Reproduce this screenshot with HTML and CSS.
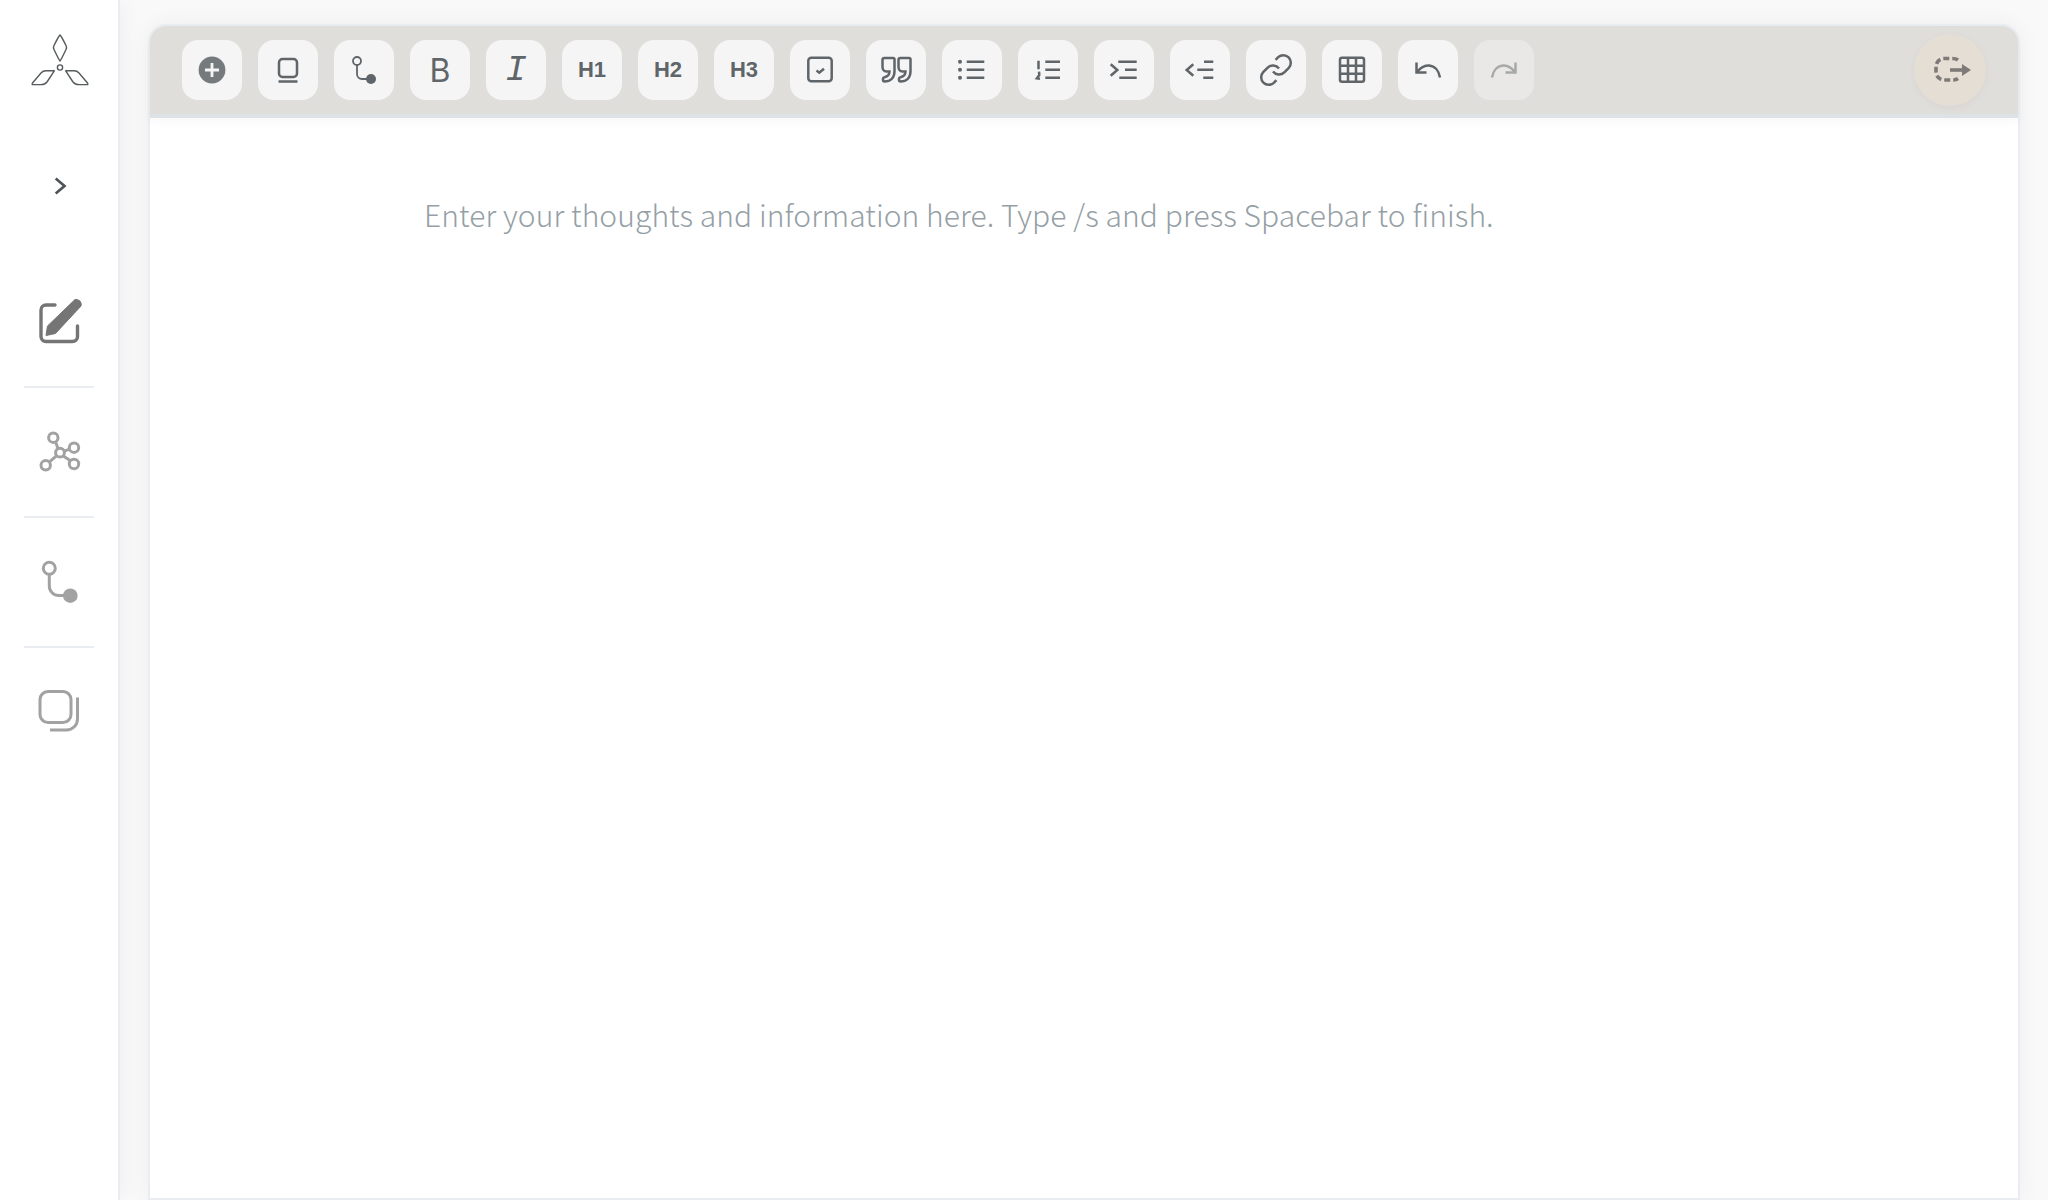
FILE: index.html
```html
<!DOCTYPE html>
<html lang="en">

<head>
    <meta charset="UTF-8">
    <meta name="viewport" content="width=device-width, initial-scale=1.0">
    <title>Editor</title>
    <link rel="stylesheet" href="styles.css">
</head>

<body>
    <div class="app">
        <aside class="sidebar">
            <div class="logo">
                <svg width="60" height="56" viewBox="29 32 60 56" class="logo-icon">
                    <path d="M60 35 Q61 35.5 66 45.5 Q67 47.5 66 49.5 Q61 60 60 61 Q59 60 54 49.5 Q53 47.5 54 45.5 Q59 35.5 60 35 Z" />
                    <circle cx="60" cy="67.5" r="2.6" />
                    <path d="M54.3 70.8 H46 Q43 70.8 41 73 L32.5 83 Q31.5 84.6 33 84.6 H41 Q45 84.6 47 82 Z" />
                    <path d="M65.7 70.8 H74 Q77 70.8 79 73 L87.5 83 Q88.5 84.6 87 84.6 H79 Q75 84.6 73 82 Z" />
                </svg>
            </div>
            <div class="expand">
                <svg width="20" height="24" viewBox="49 174 20 24" class="chevron-icon">
                    <path d="M55.7 178.5 L64.5 186 L55.7 193.5" />
                </svg>
            </div>
            <nav class="side-nav">
                <div class="side-item">
                    <svg width="48" height="48" viewBox="35 298 48 48" class="edit-icon">
                        <path d="M55 305 H46 a5 5 0 0 0 -5 5 V336.5 a5 5 0 0 0 5 5 H72.5 a5 5 0 0 0 5 -5 V326" class="edit-box" />
                        <path d="M46 335.5 L47.5 326 L75 299.5 Q77.5 299 80 301 Q82 304 81 306 L55.5 333.5 Z" class="edit-pen" />
                    </svg>
                </div>
                <div class="side-item">
                    <svg width="48" height="48" viewBox="35 428 48 48" class="side-icon">
                        <circle cx="53.3" cy="437.7" r="4.7" />
                        <circle cx="74" cy="447.7" r="4.7" />
                        <circle cx="74" cy="464" r="4.7" />
                        <circle cx="45.7" cy="465.3" r="4.7" />
                        <circle cx="60" cy="452.7" r="4.4" />
                        <path d="M55.5 441.8 L58 448.5 M64.3 451.2 L69.6 449.2 M63.2 456 L70.6 460.7 M56.7 455.6 L49.2 462.2" />
                    </svg>
                </div>
                <div class="side-item">
                    <svg width="48" height="48" viewBox="35 558 48 48" class="side-icon">
                        <circle cx="49.3" cy="568.3" r="6" />
                        <path d="M49.3 574.5 V586 a9.5 9.5 0 0 0 9.5 9.5 H70" />
                        <circle cx="70.3" cy="595.7" r="7.3" class="dot" />
                    </svg>
                </div>
                <div class="side-item">
                    <svg width="48" height="48" viewBox="35 689 48 48" class="side-icon">
                        <rect x="40" y="691.5" width="31" height="31" rx="8" />
                        <path d="M77.5 697.5 V719 a11 11 0 0 1 -11 11 H50" />
                    </svg>
                </div>
            </nav>
        </aside>

        <main class="content">
            <div class="card">
                <div class="toolbar">
                    <div class="tool">
                        <svg width="60" height="60" viewBox="0 0 60 60">
                            <circle cx="30" cy="30" r="13.4" class="plus-disc" />
                            <path d="M23 30 H37 M30 23 V37" class="plus-mark" />
                        </svg>
                    </div>
                    <div class="tool">
                        <svg width="60" height="60" viewBox="0 0 60 60">
                            <rect x="21" y="19" width="18" height="18" rx="3.5" />
                            <path d="M20.5 41.5 H39.5" />
                        </svg>
                    </div>
                    <div class="tool">
                        <svg width="60" height="60" viewBox="0 0 60 60">
                            <circle cx="23" cy="21" r="4" class="thin" />
                            <path d="M23 25 V34 a5 5 0 0 0 5 5 H37" class="thin" />
                            <circle cx="37" cy="39" r="5" class="dot" />
                        </svg>
                    </div>
                    <div class="tool letter-bold">B</div>
                    <div class="tool letter-italic">I</div>
                    <div class="tool heading">H1</div>
                    <div class="tool heading">H2</div>
                    <div class="tool heading">H3</div>
                    <div class="tool">
                        <svg width="60" height="60" viewBox="0 0 60 60">
                            <rect x="18.3" y="17.8" width="23.4" height="23.4" rx="3" />
                            <path d="M26.5 30.5 L29.3 32.7 L34 28.7" />
                        </svg>
                    </div>
                    <div class="tool">
                        <svg width="60" height="60" viewBox="0 0 60 60">
                            <path d="M18.5 18 H27 Q28.5 18 28.5 19.5 V31 C28.5 38 24.5 41.5 18.5 41.5 Q17 41.5 17 39.8 V38.5 Q17 37.5 18.5 37.2 C21.5 36.5 23.5 35 23.5 31.5 H20.5 C18 31.5 16.5 29.5 16.5 27 V20 Q16.5 18 18.5 18 Z" />
                            <path d="M34.5 18 H43 Q44.5 18 44.5 19.5 V31 C44.5 38 40.5 41.5 34.5 41.5 Q33 41.5 33 39.8 V38.5 Q33 37.5 34.5 37.2 C37.5 36.5 39.5 35 39.5 31.5 H36.5 C34 31.5 32.5 29.5 32.5 27 V20 Q32.5 18 34.5 18 Z" />
                        </svg>
                    </div>
                    <div class="tool">
                        <svg width="60" height="60" viewBox="0 0 60 60">
                            <circle cx="18" cy="21.7" r="2" class="dot" />
                            <circle cx="18" cy="29.7" r="2" class="dot" />
                            <circle cx="18" cy="37.7" r="2" class="dot" />
                            <path d="M24.7 21.7 H42.3 M24.7 29.7 H42.3 M24.7 37.7 H42.3" />
                        </svg>
                    </div>
                    <div class="tool">
                        <svg width="60" height="60" viewBox="0 0 60 60">
                            <path d="M20.5 20.7 V29.3 M21 31.7 L21.3 35 L18.9 38.3 L22 38.7" />
                            <path d="M27.3 21.7 H42 M27.3 29.7 H42 M27.3 37.7 H42" />
                        </svg>
                    </div>
                    <div class="tool">
                        <svg width="60" height="60" viewBox="0 0 60 60">
                            <path d="M16.7 24.3 L23.3 30 L16.7 35.7" />
                            <path d="M24.3 21.7 H42.7 M31 29.7 H42.7 M25.3 37.7 H42.7" />
                        </svg>
                    </div>
                    <div class="tool">
                        <svg width="60" height="60" viewBox="0 0 60 60">
                            <path d="M23.3 24.3 L16.7 30 L23.3 35.7" />
                            <path d="M34 21.7 H43.3 M27.3 29.7 H43.3 M33.3 37.7 H43.3" />
                        </svg>
                    </div>
                    <div class="tool">
                        <svg width="60" height="60" viewBox="0 0 60 60">
                            <path d="M27 31.5 a7.5 7.5 0 0 0 11.3 .8 l4.5 -4.5 a7.5 7.5 0 0 0 -10.6 -10.6 l-2.6 2.6" />
                            <path d="M33 28.5 a7.5 7.5 0 0 0 -11.3 -.8 l-4.5 4.5 a7.5 7.5 0 0 0 10.6 10.6 l2.6 -2.6" />
                        </svg>
                    </div>
                    <div class="tool">
                        <svg width="60" height="60" viewBox="0 0 60 60">
                            <rect x="18" y="17.8" width="24" height="24" rx="2" />
                            <path d="M26 17.8 V41.8 M34 17.8 V41.8 M18 25.8 H42 M18 33.8 H42" />
                        </svg>
                    </div>
                    <div class="tool">
                        <svg width="60" height="60" viewBox="0 0 60 60">
                            <path d="M18.5 22.5 V32.5 H28.5 M18.5 32.5 C22 28 26 25 31 25.5 C37 26 41 31 42 37.5" />
                        </svg>
                    </div>
                    <div class="tool tool-off">
                        <svg width="60" height="60" viewBox="0 0 60 60">
                            <path d="M41.5 22.5 V32.5 H31.5 M41.5 32.5 C38 28 34 25 29 25.5 C23 26 19 31 18 37.5" />
                        </svg>
                    </div>
                    <div class="exit">
                        <svg width="72" height="72" viewBox="0 0 72 72">
                            <path d="M44 26 C42 24.5 40 24.5 38 24.5 H30 a8 8 0 0 0 -8 8 V38 a8 8 0 0 0 8 8 H38 C40 46 42 46 44 44.5" class="exit-dash" />
                            <path d="M36 36 H50" class="exit-line" />
                            <path d="M48 30 L57 36 L48 42 Z" class="exit-head" />
                        </svg>
                    </div>
                </div>
                <div class="editor">
                    <p class="placeholder">Enter your thoughts and information here. Type /s and press Spacebar to finish.</p>
                </div>
            </div>
        </main>
    </div>
</body>

</html>
```

FILE: styles.css
```css
body {
    font-family: "Noto Sans CJK KR", "Noto Sans", sans-serif;
    margin: 0;
    padding: 0;
    background-color: #f9f9f9;
}

svg {
    display: block;
    fill: none;
}

.app {
    display: flex;
    height: 100vh;
    overflow: hidden;
}

.sidebar {
    width: 118px;
    flex-shrink: 0;
    background-color: #fff;
    border-right: 2px solid #e9edf1;
    box-shadow: 4px 0 20px rgba(0, 0, 0, 0.04);
}

.logo {
    height: 120px;
    display: flex;
    justify-content: center;
    align-items: center;
}

.logo-icon {
    stroke: #555a5c;
    stroke-width: 1.4;
    stroke-linejoin: round;
}

.expand {
    height: 132px;
    display: flex;
    justify-content: center;
    align-items: center;
}

.chevron-icon {
    stroke: #4d555a;
    stroke-width: 2.7;
}

.side-nav {
    padding: 6px 24px 0;
}

.side-item {
    height: 130px;
    box-sizing: border-box;
    border-bottom: 2px solid #e9edf1;
    display: flex;
    justify-content: center;
    align-items: center;
}

.side-item:last-child {
    border-bottom: none;
}

.edit-box {
    stroke: #757575;
    stroke-width: 3.4;
    stroke-linecap: round;
}

.edit-pen {
    fill: #757575;
    stroke: #757575;
    stroke-width: 1;
    stroke-linejoin: round;
}

.side-icon {
    stroke: #a2a2a2;
    stroke-width: 3;
}

.side-icon .dot {
    fill: #a2a2a2;
    stroke: none;
}

.content {
    flex: 1;
    padding: 24px 28px 0;
}

.card {
    height: 100%;
    box-sizing: border-box;
    background-color: #fff;
    border: 2px solid #e9edf1;
    border-radius: 18px 18px 0 0;
    box-shadow: 0 0 24px rgba(0, 0, 0, 0.05);
    display: flex;
    flex-direction: column;
}

.toolbar {
    display: flex;
    align-items: center;
    gap: 16px;
    height: 92px;
    box-sizing: border-box;
    padding: 8px 32px;
    background-color: #dfdeda;
    border-bottom: 4px solid #dde2e6;
    border-radius: 16px 16px 0 0;
    box-shadow: 0 4px 10px rgba(0, 0, 0, 0.03);
}

.tool {
    width: 60px;
    height: 60px;
    flex-shrink: 0;
    border-radius: 16px;
    background-color: #f5f5f5;
    color: #5f6568;
    display: flex;
    justify-content: center;
    align-items: center;
}

.tool svg {
    stroke: #5f6568;
    stroke-width: 2.5;
}

.tool .thin {
    stroke-width: 1.8;
}

.tool .dot {
    fill: #5f6568;
    stroke: none;
}

.tool .plus-disc {
    fill: #757b7d;
    stroke: none;
}

.tool .plus-mark {
    stroke: #f5f5f5;
    stroke-width: 2.8;
}

.tool-off {
    background-color: #e9e8e6;
}

.tool-off svg {
    stroke: #a7a9a9;
}

.heading {
    font-family: "Liberation Sans", Arial, sans-serif;
    font-size: 22px;
    font-weight: bold;
}

.letter-bold {
    font-family: Inter, sans-serif;
    font-size: 32px;
    font-weight: 400;
}

.letter-italic {
    font-family: "Liberation Mono", monospace;
    font-size: 36px;
    font-style: italic;
}

.exit {
    width: 72px;
    height: 72px;
    margin-left: auto;
    border-radius: 50%;
    background-color: #e5ded5;
    box-shadow: 0 2px 8px rgba(0, 0, 0, 0.04);
}

.exit svg {
    stroke: #7d7a77;
}

.exit-dash {
    stroke-width: 3.6;
    stroke-dasharray: 6 3;
}

.exit-line {
    stroke-width: 3.6;
}

.exit-head {
    fill: #7d7a77;
    stroke: none;
}

.editor {
    flex: 1;
    padding: 74px 274px 0;
}

.placeholder {
    margin: 0;
    font-size: 30px;
    font-weight: 300;
    letter-spacing: 0.07px;
    line-height: 44px;
    color: #95a0a6;
    white-space: nowrap;
}
```
